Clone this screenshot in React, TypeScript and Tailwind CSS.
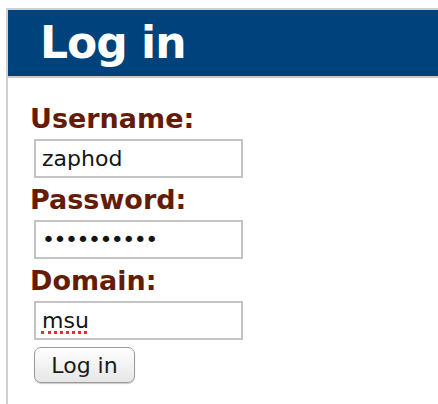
// Simple domain login panel: blue title bar, three labelled fields and a submit button.

const labelCls =
  "block font-['DejaVu_Sans',sans-serif] font-bold text-[27px] leading-[30px] text-[#641c06]"
const inputCls =
  "block ml-[4px] w-[209px] h-[39px] border-2 border-[#c4c4c4] bg-white px-[6px] font-['DejaVu_Sans',sans-serif] text-[22px] text-[#151515] outline-none"

function Field({ label, type, value, spell }: { label: string; type: string; value: string; spell?: boolean }) {
  const pwd = type === "password"
  return (
    <div className="mb-[7px]">
      <label className={labelCls}>{label}</label>
      <div className="relative mt-[5px]">
        <input
          className={`${inputCls} ${pwd ? "tracking-[-1.5px]" : ""}`}
          type={type}
          defaultValue={value}
          readOnly
          spellCheck={false}
        />
        {/* spell-check squiggle under an unknown word */}
        {spell && (
          <span className="absolute left-[11px] top-[30px] w-[46px] border-b-[3px] border-dotted border-[#e03030]" />
        )}
      </div>
    </div>
  )
}

export default function App() {
  return (
    <div className="w-[438px] h-[404px] overflow-hidden bg-white pt-[8px] pl-[6px]">
      <div className="w-[480px] h-[420px] border-2 border-[#d0d0d0]">
        <div className="h-[68px] bg-[#00437c] border-b-2 border-[#c9c9c9] pl-[32px] flex items-center">
          <h1 className="font-['DejaVu_Sans',sans-serif] font-bold text-[44px] leading-none text-white tracking-[-1px]">
            Log in
          </h1>
        </div>
        <form className="pl-[22px] pt-[26px]">
          <Field label="Username:" type="text" value="zaphod" />
          <Field label="Password:" type="password" value="passwords1" />
          <Field label="Domain:" type="text" value="msu" spell />
          <button
            type="button"
            className="block ml-[4px] mt-[5px] w-[101px] h-[36px] rounded-[7px] border border-[#9a9a9a] bg-gradient-to-b from-white to-[#e6e6e6] font-['DejaVu_Sans',sans-serif] text-[22px] text-[#1a1a1a] shadow-[0_1px_1px_rgba(0,0,0,0.2)]"
          >
            Log in
          </button>
        </form>
      </div>
    </div>
  )
}
